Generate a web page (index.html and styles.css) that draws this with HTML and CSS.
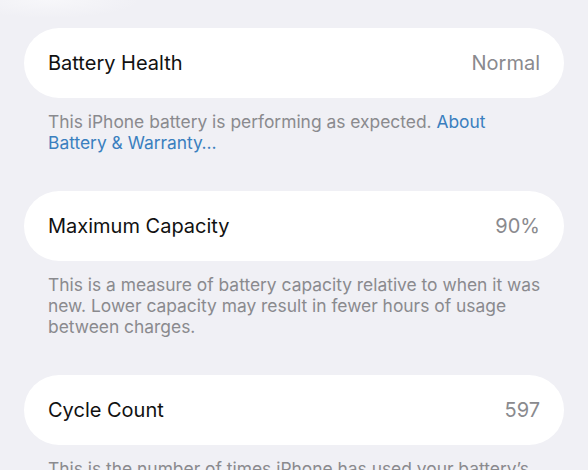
FILE: index.html
```html
<!DOCTYPE html>
<html lang="en">
<head>
  <meta charset="UTF-8">
  <title>Battery Health</title>
  <link rel="stylesheet" href="styles.css">
</head>
<body>
  <div class="page">
    <div class="group">
      <div class="row">
        <span class="label">Battery Health</span>
        <span class="value">Normal</span>
      </div>
      <p class="note">This iPhone battery is performing as expected. <a href="#">About Battery &amp; Warranty…</a></p>
    </div>

    <div class="group">
      <div class="row">
        <span class="label">Maximum Capacity</span>
        <span class="value">90%</span>
      </div>
      <p class="note">This is a measure of battery capacity relative to when it was new. Lower capacity may result in fewer hours of usage between charges.</p>
    </div>

    <div class="group">
      <div class="row">
        <span class="label">Cycle Count</span>
        <span class="value">597</span>
      </div>
      <p class="note">This is the number of times iPhone has used your battery’s full capacity.</p>
    </div>
  </div>
</body>
</html>
```

FILE: styles.css
```css
body {
  margin: 0;
  height: 470px;
  overflow: hidden;
  font-family: Inter, "Noto Sans", sans-serif;
  background: radial-gradient(ellipse 90px 18px at 50px 0, #f7f7fa, rgba(247, 247, 250, 0)), #f0f0f5;
}
.page {
  padding: 28px 24px 0;
  display: flex;
  flex-direction: column;
  gap: 38px;
}
.row {
  background: white;
  border-radius: 35px;
  height: 70px;
  padding: 0 24px;
  display: flex;
  align-items: center;
  justify-content: space-between;
  font-size: 20px;
}
.label {
  color: #111;
}
.value {
  color: #8a8a8e;
}
.note {
  margin: 13px 19px 0 24px;
  font-size: 17.4px;
  line-height: 21px;
  color: #8a8a8e;
}
.note a {
  color: #3a7fbf;
  text-decoration: none;
}
```
